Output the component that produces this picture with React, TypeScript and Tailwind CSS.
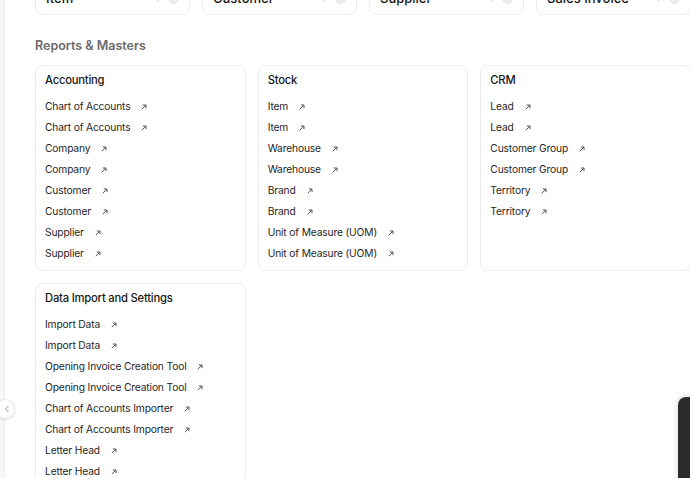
import React from "react";

type Section = { title: string; links: string[] };

const shortcuts = ["Item", "Customer", "Supplier", "Sales Invoice"];

const twice = (items: string[]) => items.flatMap((i) => [i, i]);

const sections: Section[] = [
  {
    title: "Accounting",
    links: twice(["Chart of Accounts", "Company", "Customer", "Supplier"]),
  },
  {
    title: "Stock",
    links: twice(["Item", "Warehouse", "Brand", "Unit of Measure (UOM)"]),
  },
  {
    title: "CRM",
    links: twice(["Lead", "Customer Group", "Territory"]),
  },
  {
    title: "Data Import and Settings",
    links: twice([
      "Import Data",
      "Opening Invoice Creation Tool",
      "Chart of Accounts Importer",
      "Letter Head",
    ]),
  },
];

function ArrowUpRight({ className = "" }: { className?: string }) {
  return (
    <svg width="6" height="6" viewBox="0 0 6 6" fill="none" className={className} aria-hidden="true">
      <path d="M0.8 5.2 L4.8 1.2 M1.8 1 H5 V4.2" stroke="currentColor" strokeWidth="1" />
    </svg>
  );
}

function ShortcutCard({ label }: { label: string }) {
  return (
    <div className="h-[33px] -mt-[18px] flex items-center justify-between px-[10px] rounded-lg border border-[#ebebeb] bg-white">
      <span className="text-[13px] font-medium text-[#171717]">{label}</span>
      <div className="flex items-center gap-[6px]">
        <ArrowUpRight className="text-[#c4c4c4]" />
        <span className="w-[11px] h-[11px] rounded-full bg-[#ececec]" />
      </div>
    </div>
  );
}

function SectionCard({ section }: { section: Section }) {
  return (
    <div className="rounded-lg border border-[#ebebeb] bg-white px-[9px] pt-[6px] pb-[6px]">
      <div className="h-[16px] leading-[16px] text-[11.25px] tracking-[-0.02em] font-medium text-[#171717]">
        {section.title}
      </div>
      <ul className="mt-[8px] flex flex-col">
        {section.links.map((link, i) => (
          <li key={i} className="h-[21px] flex items-center gap-[11px] text-[10.25px] tracking-[-0.015em] text-[#1f1f1f]">
            <span>{link}</span>
            <ArrowUpRight className="text-[#525252] mt-[1px]" />
          </li>
        ))}
      </ul>
    </div>
  );
}

export default function App() {
  return (
    <div
      className="relative h-[478px] w-[690px] overflow-hidden bg-white flex"
      style={{ fontFamily: "Inter, 'Noto Sans', sans-serif" }}
    >
      {/* collapsed sidebar rail */}
      <div className="w-[5px] shrink-0 bg-[#f7f7f7] border-r border-[#ececec]" />

      <main className="pl-[30px] w-[686px] shrink-0">
        <div className="grid grid-cols-4 gap-3">
          {shortcuts.map((s) => (
            <ShortcutCard key={s} label={s} />
          ))}
        </div>

        <h2 className="mt-[22px] text-[12.5px] leading-[18px] font-semibold text-[#6b6b6b]">Reports &amp; Masters</h2>

        <div className="mt-[10px] grid grid-cols-3 gap-x-3 gap-y-[12px]">
          {sections.map((s) => (
            <SectionCard key={s.title} section={s} />
          ))}
        </div>
      </main>

      {/* sidebar toggle */}
      <button className="absolute left-[-5px] top-[399px] w-[20px] h-[20px] rounded-full bg-white border border-[#ececec] shadow-sm flex items-center justify-end pr-[4px] text-[#9a9a9a]">
        <svg width="6" height="8" viewBox="0 0 6 8" fill="none" aria-hidden="true">
          <path d="M4.5 1 L1.5 4 L4.5 7" stroke="currentColor" strokeWidth="1" />
        </svg>
      </button>

      {/* floating dark panel */}
      <div className="absolute left-[678px] top-[397px] w-[40px] h-[100px] rounded-tl-lg bg-[#2b2b2b] shadow-[0_0_10px_rgba(0,0,0,0.15)]" />
    </div>
  );
}
